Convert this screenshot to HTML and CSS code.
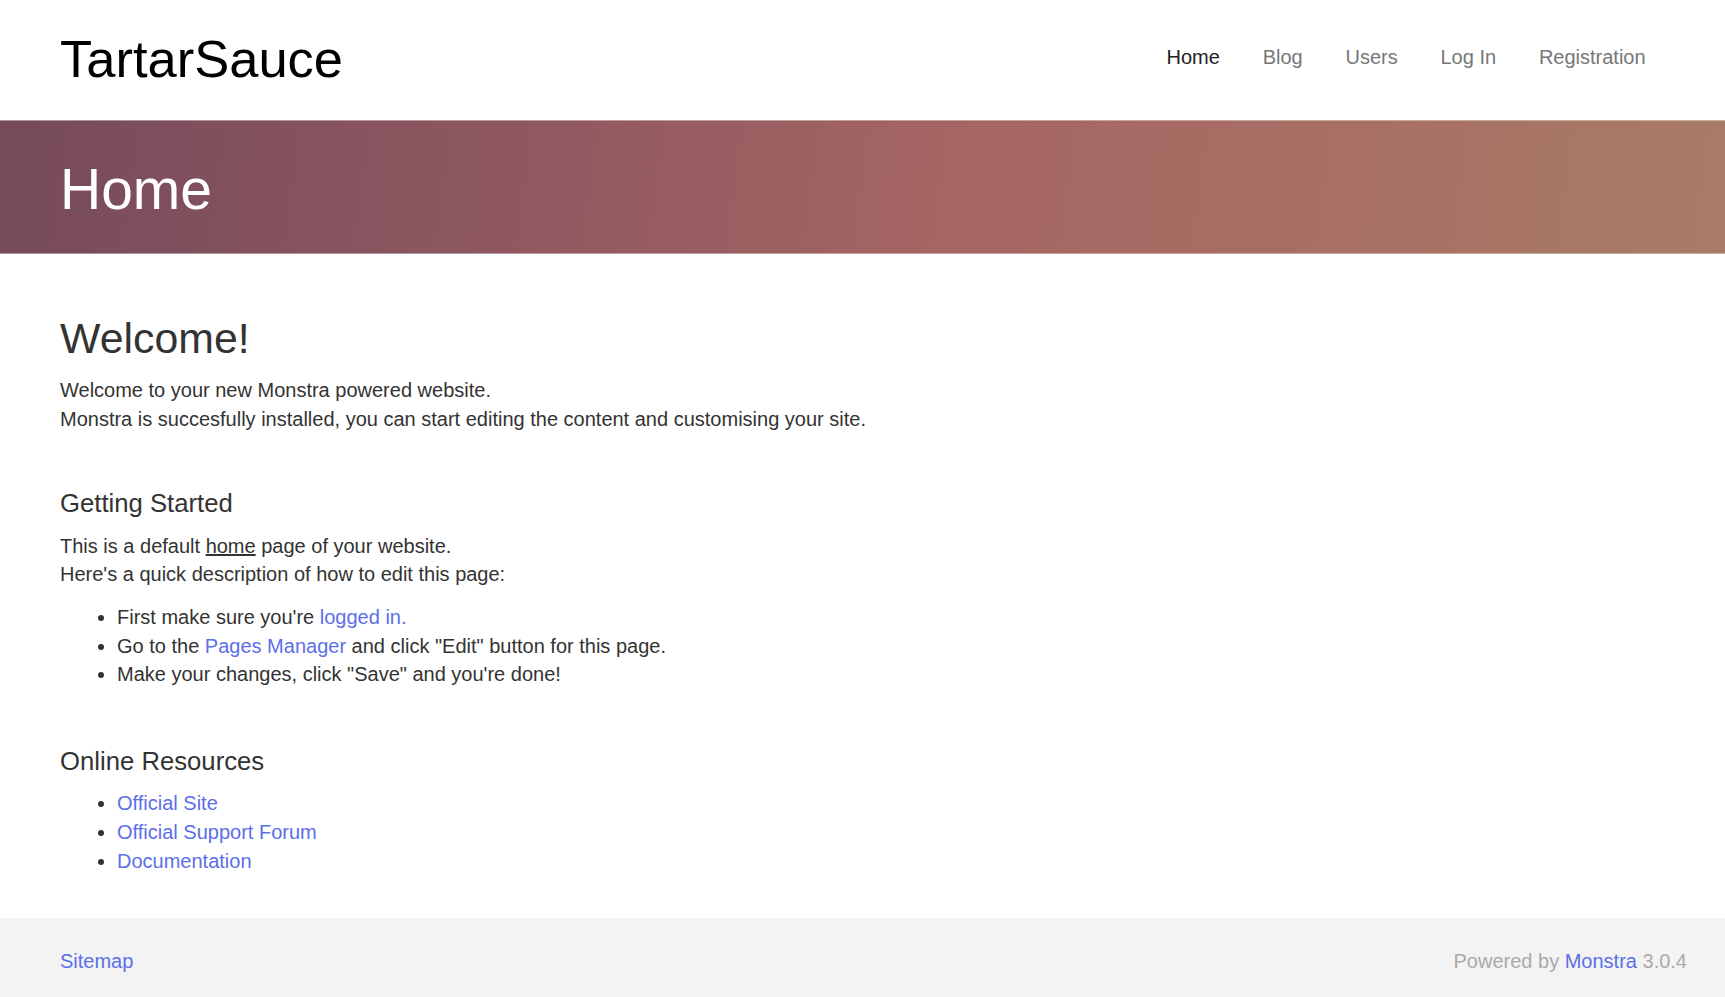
FILE: index.html
```html
<!DOCTYPE html>
<html lang="en">
<head>
<meta charset="utf-8">
<title>TartarSauce - Home</title>
<link rel="stylesheet" href="styles.css">
</head>
<body>
<header class="site-header">
  <a class="brand" href="#">TartarSauce</a>
  <nav class="main-nav">
    <a class="nav-link active" href="#">Home</a>
    <a class="nav-link" href="#">Blog</a>
    <a class="nav-link" href="#">Users</a>
    <a class="nav-link" href="#">Log In</a>
    <a class="nav-link" href="#">Registration</a>
  </nav>
</header>
<section class="page-banner">
  <h1 class="page-title">Home</h1>
</section>
<main class="content">
  <h2 class="welcome">Welcome!</h2>
  <p>Welcome to your new Monstra powered website.<br>Monstra is succesfully installed, you can start editing the content and customising your site.</p>
  <h4 class="section-title">Getting Started</h4>
  <p>This is a default <u>home</u> page of your website.<br>Here's a quick description of how to edit this page:</p>
  <ul class="bullets">
    <li>First make sure you're <a href="#">logged in.</a></li>
    <li>Go to the <a href="#">Pages Manager</a> and click "Edit" button for this page.</li>
    <li>Make your changes, click "Save" and you're done!</li>
  </ul>
  <h4 class="section-title section-title-last">Online Resources</h4>
  <ul class="bullets">
    <li><a href="#">Official Site</a></li>
    <li><a href="#">Official Support Forum</a></li>
    <li><a href="#">Documentation</a></li>
  </ul>
</main>
<footer class="site-footer">
  <a href="#">Sitemap</a>
  <span class="powered">Powered by <a href="#">Monstra</a> 3.0.4</span>
</footer>
</body>
</html>
```
FILE: styles.css
```css
* { box-sizing: border-box; }
html, body { margin: 0; padding: 0; }
body {
  font-family: "Liberation Sans", Arial, Helvetica, sans-serif;
  font-size: 20px;
  line-height: 1.428571;
  color: #333;
  background: #fff;
}
a { color: #5b6fe8; text-decoration: none; }

.site-header {
  height: 120px;
  display: flex;
  justify-content: space-between;
  align-items: flex-start;
  padding: 0 58px 0 60px;
}
.brand {
  color: #000;
  font-size: 52.5px;
  line-height: 1.1;
  margin-top: 30px;
}
.main-nav {
  display: flex;
  margin-top: 43px;
}
.nav-link {
  color: #777;
  padding: 0 21.4px;
  line-height: 28.57px;
}
.nav-link.active { color: #222; }

.page-banner {
  height: 134px;
  display: flex;
  align-items: center;
  padding: 0 60px;
  border-top: 1px solid rgba(255,255,255,0.4);
  border-bottom: 1px solid rgba(255,255,255,0.4);
  background: linear-gradient(98deg, #764a5b 0%, #8f5860 30%, #a56563 55%, #a86e64 75%, #a87c66 100%);
}
.page-title {
  margin: 0;
  color: #fff;
  font-size: 57px;
  font-weight: normal;
  line-height: 1.1;
  padding-top: 4px;
}

.content {
  padding: 32px 60px 29px;
}
.welcome {
  font-size: 42.86px;
  font-weight: normal;
  line-height: 1.1;
  margin: 28.6px 0 14.3px;
  color: #333;
}
.content p { margin: 0 0 14.3px; }
.section-title {
  font-size: 25.7px;
  font-weight: normal;
  line-height: 1.1;
  margin: 56px 0 14.3px;
  color: #333;
}
.section-title-last { margin-top: 58px; }
.bullets {
  margin: 0 0 14.3px;
  padding-left: 57px;
}
.content u { text-decoration: underline; }

.site-footer {
  background: #f3f3f3;
  display: flex;
  justify-content: space-between;
  padding: 28.6px 38px 28.6px 60px;
}
.powered { color: #aaa; }
```
